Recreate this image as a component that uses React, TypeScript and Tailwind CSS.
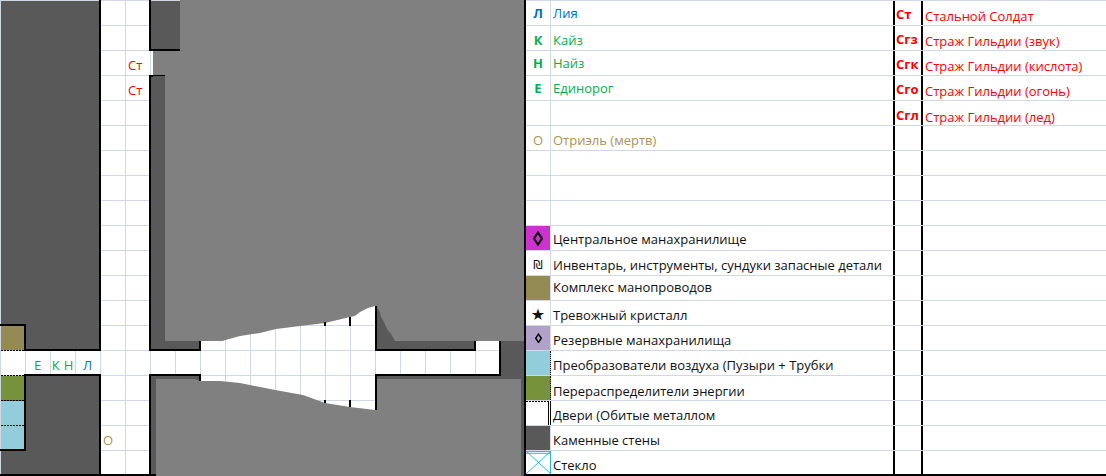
const FONT = "font-['Open_Sans','Noto_Sans','DejaVu_Sans',sans-serif]";

function MapShapes() {
  const LIGHT = "#808080";
  const DARK = "#595959";
  const W = "#000000";
  return (
    <svg className="absolute left-0 top-0 h-[476px] w-[524px]" viewBox="0 0 524 476" shapeRendering="crispEdges">
      {/* dark stone */}
      <rect x="1" y="1" width="98" height="349" fill={DARK} />
      <rect x="1" y="376" width="98" height="98" fill={DARK} />
      <rect x="151" y="1" width="29" height="49" fill={DARK} />
      <rect x="151" y="76" width="49" height="274" fill={DARK} />
      <rect x="151" y="376" width="49" height="100" fill={DARK} />
      <rect x="376" y="300" width="98" height="50" fill={DARK} />
      <rect x="474" y="300" width="50" height="41" fill={DARK} />
      <rect x="501" y="341" width="23" height="135" fill={DARK} />
      <rect x="377" y="376" width="124" height="4" fill={DARK} />
      {/* coloured blocks */}
      <rect x="1" y="326" width="23" height="24" fill="#948a54" />
      <rect x="1" y="376" width="23" height="24" fill="#76933c" />
      <rect x="1" y="401" width="23" height="48" fill="#92cddc" />
      {/* overlay */}
      <g shapeRendering="geometricPrecision">
        <polygon
          fill={LIGHT}
          points="180,0 524,0 524,341 395,341 391,334 387,329 384,322 381,317 380,312 376,306 375,306 368,308 360,312 355,316 350,317 325,323 300,326 276,329 260,333 240,336 222,341 165,341 165,75 153,75 153,51 180,51"
        />
        <polygon
          fill={LIGHT}
          points="156,379 195,379 200,381 220,381 240,383 260,387 275,390 303,395 325,403 350,407 375,410 377,410 377,379 521,379 521,476 156,476"
        />
      </g>
      {/* walls */}
      <rect x="99" y="0" width="2" height="351" fill={W} />
      <rect x="99" y="375" width="2" height="101" fill={W} />
      <rect x="149" y="0" width="2" height="51" fill={W} />
      <rect x="149" y="49" width="31" height="2" fill={W} />
      <rect x="149" y="75" width="16" height="1" fill={W} />
      <rect x="149" y="75" width="4" height="2" fill={W} />
      <rect x="149" y="75" width="2" height="276" fill={W} />
      <rect x="149" y="349" width="52" height="2" fill={W} />
      <rect x="199" y="341" width="2" height="10" fill={W} />
      <rect x="149" y="374" width="52" height="2" fill={W} />
      <rect x="199" y="374" width="2" height="7" fill={W} />
      <rect x="149" y="374" width="2" height="102" fill={W} />
      <rect x="24" y="349" width="77" height="2" fill={W} />
      <rect x="24" y="374" width="77" height="2" fill={W} />
      <rect x="0" y="324" width="26" height="2" fill={W} />
      <rect x="24" y="324" width="2" height="27" fill={W} />
      <rect x="24" y="374" width="2" height="77" fill={W} />
      <rect x="0" y="449" width="26" height="2" fill={W} />
      <rect x="0" y="474" width="156" height="2" fill={W} />
      <path d="M1 350.5H24M1 375.5H24M1 400.5H24M1 425.5H24" stroke={W} strokeWidth="1" strokeDasharray="2 1" fill="none" />
      <rect x="375" y="306" width="2" height="45" fill={W} />
      <rect x="375" y="349" width="101" height="2" fill={W} />
      <rect x="474" y="341" width="2" height="10" fill={W} />
      <rect x="499" y="341" width="2" height="35" fill={W} />
      <rect x="375" y="374" width="126" height="2" fill={W} />
      <rect x="375" y="374" width="2" height="36" fill={W} />
      <rect x="324" y="322" width="2" height="4" fill={W} />
      <rect x="349" y="317" width="2" height="9" fill={W} />
      <rect x="324" y="400" width="2" height="3" fill={W} />
      <rect x="349" y="400" width="2" height="7" fill={W} />
    </svg>
  );
}

function Diamond({ size }: { size: number }) {
  return (
    <svg width={size} height={size * 1.5} viewBox="0 0 10 15">
      <polygon points="5,1.5 9,7.5 5,13.5 1,7.5" fill="none" stroke="#000" strokeWidth="2" />
    </svg>
  );
}

function Glass() {
  return (
    <svg className="h-full w-full" viewBox="0 0 25 25" preserveAspectRatio="none">
      <rect x="0" y="0" width="25" height="25" fill="#fff" />
      <path d="M0 0.5H25M0 2.5H25M24.5 0V25M0 0L25 25M25 0L0 25" stroke="#22b4dc" strokeWidth="1" fill="none" />
    </svg>
  );
}

function Door() {
  return (
    <svg className="h-full w-full" viewBox="0 0 25 24" preserveAspectRatio="none" shapeRendering="crispEdges">
      <rect x="0" y="0" width="25" height="24" fill="#fff" />
      <path d="M0 0.5H24" stroke="#000" strokeDasharray="2 1" fill="none" />
      <path d="M22.5 0V24M24.5 0V24" stroke="#000" fill="none" />
    </svg>
  );
}

type Row = {
  key: string;
  keyClass?: string;
  icon?: React.ReactNode;
  iconClass?: string;
  name?: string;
  nameClass?: string;
  code?: string;
  codeClass?: string;
  mob?: string;
  mobClass?: string;
};

const rows: Row[] = [
  { key: "Л", keyClass: "text-[#0070c0]", name: "Лия", nameClass: "text-[#0070c0]", code: "Ст", codeClass: "pt-[2px]", mob: "Стальной Солдат", mobClass: "pt-[6px]" },
  { key: "К", keyClass: "text-[#00b050] pt-[4px]", name: "Кайз", nameClass: "text-[#00b050] pt-[4px]", code: "Сгз", codeClass: "pt-[3px]", mob: "Страж Гильдии (звук)", mobClass: "pt-[6px]" },
  { key: "Н", keyClass: "text-[#00b050] pt-[1px]", name: "Найз", nameClass: "text-[#00b050] pt-[1px]", code: "Сгк", codeClass: "pt-[2px]", mob: "Страж Гильдии (кислота)", mobClass: "pt-[6px]" },
  { key: "Е", keyClass: "text-[#00b050] pt-[1px]", name: "Единорог", nameClass: "text-[#00b050] pt-[1px]", code: "Сго", codeClass: "pt-[2px]", mob: "Страж Гильдии (огонь)", mobClass: "pt-[6px]" },
  { key: "", code: "Сгл", codeClass: "pt-[4px]", mob: "Страж Гильдии (лед)", mobClass: "pt-[8px]" },
  { key: "О", keyClass: "text-[#ac9255] !font-normal pt-[4px]", name: "Отриэль (мертв)", nameClass: "text-[#ac9255] pt-[4px]" },
  { key: "" },
  { key: "" },
  { key: "" },
  { key: "diamond", icon: <Diamond size={10} />, iconClass: "bg-[#cc33cc]", name: "Центральное манахранилище", nameClass: "pt-[3px]" },
  { key: "shekel", icon: <span className="pt-[4px] font-['DejaVu_Sans'] text-[12px] leading-none">₪</span>, name: "Инвентарь, инструменты, сундуки запасные детали", nameClass: "pt-[5px]" },
  { key: "tan", iconClass: "bg-[#948a54]", name: "Комплекс манопроводов", nameClass: "pb-[1px]" },
  { key: "star", icon: <span className="pt-[3px] font-['DejaVu_Sans'] text-[16px] leading-none">★</span>, name: "Тревожный кристалл", nameClass: "pt-[4px]" },
  { key: "smalldiamond", icon: <Diamond size={7} />, iconClass: "bg-[#b1a0c7]", name: "Резервные манахранилища", nameClass: "pt-[4px]" },
  { key: "blue", iconClass: "bg-[#92cddc] border-r border-dotted !border-black", name: "Преобразователи воздуха (Пузыри + Трубки", nameClass: "pt-[5px]" },
  { key: "olive", iconClass: "bg-[#76933c] border-r border-dotted !border-black", name: "Перераспределители энергии", nameClass: "pt-[6px]" },
  { key: "door", icon: <Door />, iconClass: "!border-r-0", name: "Двери (Обитые металлом", nameClass: "pt-[5px]" },
  { key: "stone", iconClass: "bg-[#595959]", name: "Каменные стены", nameClass: "pt-[5px]" },
  { key: "glass", icon: <Glass />, iconClass: "!border-r-0", name: "Стекло", nameClass: "pt-[5px]" },
];

function LegendRow({ row, last }: { row: Row; last: boolean }) {
  const isChar = row.key.length === 1;
  return (
    <div className={`flex border-t border-[#d0d7e5] ${last ? "h-[26px] border-b-2 border-b-black" : "h-[25px]"}`}>
      <div
        className={`flex w-[25px] shrink-0 items-center justify-center border-r border-[#d0d7e5] ${row.iconClass ?? ""}`}
      >
        {isChar ? <span className={`font-bold ${row.keyClass ?? ""}`}>{row.key}</span> : row.icon}
      </div>
      <div className={`flex w-[342px] shrink-0 items-center pl-[2px] whitespace-nowrap ${row.nameClass ?? ""}`}>
        {row.name}
      </div>
      <div className={`flex w-[28px] shrink-0 items-center border-l-2 border-black pl-[1px] font-bold text-[#ff0000] ${row.codeClass ?? ""}`}>
        {row.code}
      </div>
      <div className={`flex flex-1 items-center border-l-2 border-black pl-[2px] whitespace-nowrap text-[#ff0000] ${row.mobClass ?? ""}`}>
        {row.mob}
      </div>
    </div>
  );
}

export default function App() {
  return (
    <div className={`flex h-[476px] w-[1106px] overflow-hidden bg-white text-[13px] leading-none text-[#111] ${FONT}`}>
      <div className="relative grid h-[476px] w-[524px] shrink-0 grid-cols-[repeat(21,25px)] grid-rows-[repeat(19,25px)] bg-white bg-[linear-gradient(to_right,#d0d7e5_1px,transparent_1px),linear-gradient(to_bottom,#d0d7e5_1px,transparent_1px)] bg-[size:25px_25px]">
        <MapShapes />
        <span className="relative col-start-6 row-start-3 flex items-center pl-[3px] pt-[6px] text-[#ff0000]">Ст</span>
        <span className="relative col-start-6 row-start-4 flex items-center pl-[3px] pt-[6px] text-[#ff0000]">Ст</span>
        <span className="relative col-start-2 row-start-15 flex items-center justify-center pt-[5px] text-[#00b050]">Е</span>
        <span className="relative col-start-3 row-start-15 flex items-center justify-center gap-[4px] pt-[5px] text-[#00b050]">
          <span>К</span>
          <span>Н</span>
        </span>
        <span className="relative col-start-4 row-start-15 flex items-center justify-center pt-[5px] text-[#0070c0]">Л</span>
        <span className="relative col-start-5 row-start-18 flex items-center pl-[3px] pt-[5px] text-[#ac9255]">О</span>
      </div>
      <div className="flex-1 border-l-2 border-black">
        {rows.map((r, i) => (
          <LegendRow key={i} row={r} last={i === rows.length - 1} />
        ))}
      </div>
    </div>
  );
}
